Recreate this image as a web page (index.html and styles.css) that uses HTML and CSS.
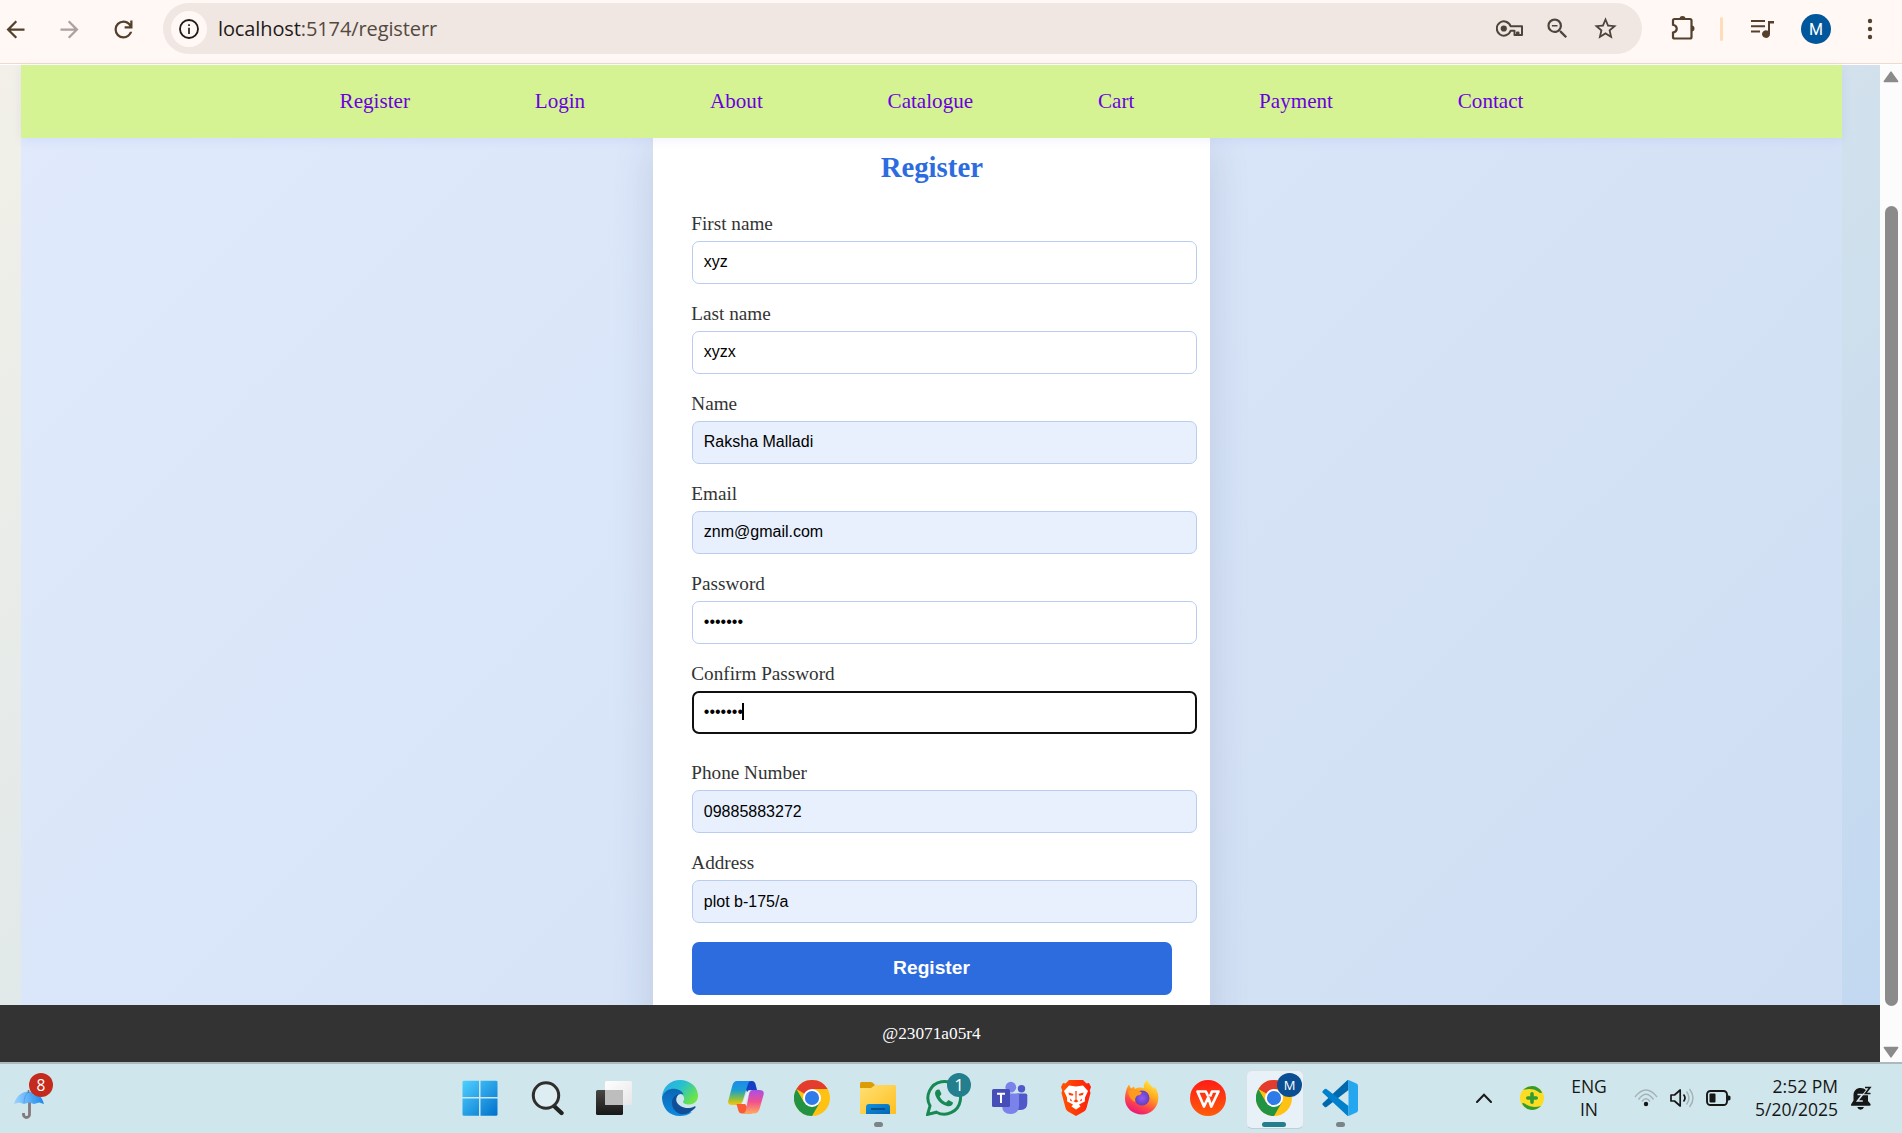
FILE: index.html
```html
<!DOCTYPE html>
<html lang="en">
<head>
<meta charset="utf-8">
<title>Register</title>
<link rel="stylesheet" href="styles.css">
</head>
<body>
<header class="toolbar">
  <svg class="ic" viewBox="0 0 24 24"><path d="M20 11H7.83l5.59-5.59L12 4l-8 8 8 8 1.41-1.41L7.83 13H20z"/></svg>
  <svg class="ic faded" viewBox="0 0 24 24"><path d="M4 11h12.17l-5.59-5.59L12 4l8 8-8 8-1.41-1.41L16.17 13H4z"/></svg>
  <svg class="ic" viewBox="0 0 24 24"><path d="M12 20q-3.35 0-5.675-2.325T4 12t2.325-5.675T12 4q1.725 0 3.3.712T18 6.75V4h2v7h-7V9h4.2q-.8-1.4-2.187-2.2T12 6Q9.500 6 7.750 7.750T6 12t1.750 4.250T12 18q1.925 0 3.475-1.100T17.650 14h2.100q-.700 2.650-2.850 4.325T12 20"/></svg>
  <div class="omnibox">
    <span class="info"><svg viewBox="0 0 24 24"><circle cx="12" cy="12" r="10.800" fill="none" stroke="#1f1a18" stroke-width="2.200"/><path d="M11 10.500h2V18h-2zM11 6.300h2v2.200h-2z" fill="#1f1a18"/></svg></span>
    <span class="url"><b>localhost</b>:5174/registerr</span>
    <span class="actions">
      <svg class="key" viewBox="0 0 27 17"><g fill="none" stroke="#4f443c" stroke-width="2"><path d="M14.600 6.200A7.100 7.100 0 1 0 14.600 10.800H18.500V15H21V12.500H22.500V15H26V6.200z" stroke-linejoin="round"/></g><circle cx="7.800" cy="8.500" r="3.100" fill="#4f443c"/></svg>
      <svg class="ic grey" viewBox="0 0 24 24"><path d="M15.500 14h-.790l-.280-.270A6.471 6.471 0 0 0 16 9.500 6.500 6.500 0 1 0 9.500 16c1.610 0 3.090-.590 4.230-1.570l.270.280v.790l5 4.990L20.490 19zm-6 0C7.010 14 5 11.990 5 9.500S7.010 5 9.500 5 14 7.010 14 9.500 11.990 14 9.500 14zM7 8.800h5v1.400H7z"/></svg>
      <svg class="ic grey" viewBox="0 0 24 24"><path d="M22 9.240l-7.190-.620L12 2 9.190 8.630 2 9.240l5.460 4.730L5.820 21 12 17.270 18.180 21l-1.630-7.030zM12 15.400l-3.760 2.270 1-4.280-3.320-2.880 4.380-.380L12 6.100l1.710 4.040 4.380.380-3.320 2.880 1 4.280z"/></svg>
    </span>
  </div>
  <svg class="ext" viewBox="0 0 26 26"><path d="M4.500 4H20Q21.500 4 21.500 5.500V22Q21.500 23.500 20 23.500H4.500Q3 23.500 3 22V17.600C8 16.500 8 11 3 9.800V5.500Q3 4 4.500 4z" fill="none" stroke="#54402c" stroke-width="2.200"/><path d="M9.500 4a3 3 0 0 1 6 0zM21.500 10.500a3 3 0 0 1 0 6z" fill="#54402c"/></svg>
  <i class="divider"></i>
  <svg class="media" viewBox="0 0 24 19"><path d="M0 1h14M0 6.200h14M0 11.400h9" stroke="#54402c" stroke-width="2" fill="none"/><path d="M17 1h6v2.400h-4V14a4 3.800 0 1 1-2-3.200z" fill="#54402c"/></svg>
  <span class="avatar">M</span>
  <svg class="menu" viewBox="0 0 6 22"><circle cx="3" cy="3" r="2.200"/><circle cx="3" cy="11" r="2.200"/><circle cx="3" cy="19" r="2.200"/></svg>
</header>

<div class="viewport">
  <div class="site">
    <div class="app">
      <nav class="nav"><a>Register</a><a>Login</a><a>About</a><a>Catalogue</a><a>Cart</a><a>Payment</a><a>Contact</a></nav>
      <main class="stage">
        <form class="card">
          <h2>Register</h2>
          <div class="field"><label>First name</label><div class="input">xyz</div></div>
          <div class="field"><label>Last name</label><div class="input">xyzx</div></div>
          <div class="field"><label>Name</label><div class="input filled">Raksha Malladi</div></div>
          <div class="field"><label>Email</label><div class="input filled">znm@gmail.com</div></div>
          <div class="field"><label>Password</label><div class="input">•••••••</div></div>
          <div class="field focus"><label>Confirm Password</label><div class="input">•••••••<i class="caret"></i></div></div>
          <div class="field"><label>Phone Number</label><div class="input filled low">09885883272</div></div>
          <div class="field"><label>Address</label><div class="input filled low">plot b-175/a</div></div>
          <button type="button">Register</button>
        </form>
      </main>
    </div>
    <footer class="footer">@23071a05r4</footer>
  </div>
  <div class="scroll">
    <svg viewBox="0 0 16 12"><path d="M8 1.200L14.600 10.500H1.400z" fill="#8b8b8b" stroke="#8b8b8b" stroke-width="1.600" stroke-linejoin="round"/></svg>
    <i class="thumb"></i>
    <svg viewBox="0 0 16 12"><path d="M8 10.800L14.600 1.500H1.400z" fill="#8b8b8b" stroke="#8b8b8b" stroke-width="1.600" stroke-linejoin="round"/></svg>
  </div>
</div>

<div class="taskbar">
  <svg width="0" height="0" class="defs"><defs>
    <linearGradient id="win" x1="0" y1="0" x2="1" y2="1"><stop offset="0" stop-color="#4fd0ff"/><stop offset="1" stop-color="#0070cc"/></linearGradient>
    <linearGradient id="tvd" x1="0" y1="0" x2="0" y2="1"><stop offset="0" stop-color="#484644"/><stop offset="1" stop-color="#181818"/></linearGradient>
    <linearGradient id="tvl" x1="0" y1="0" x2="1" y2="1"><stop offset="0" stop-color="#fff"/><stop offset="1" stop-color="#e6e6e8"/></linearGradient>
    <linearGradient id="e1" x1="0" y1="0" x2="1" y2=".6"><stop offset="0" stop-color="#2aa9ee"/><stop offset=".5" stop-color="#28c0cf"/><stop offset="1" stop-color="#6be547"/></linearGradient>
    <linearGradient id="e2" x1="0" y1="0" x2="0" y2="1"><stop offset="0" stop-color="#0c66b4"/><stop offset="1" stop-color="#0c8ae0"/></linearGradient>
    <linearGradient id="c1" x1="0" y1="0" x2="0" y2="1"><stop offset="0" stop-color="#1a8bf0"/><stop offset=".4" stop-color="#1d9fd0"/><stop offset=".7" stop-color="#7dbc50"/><stop offset="1" stop-color="#ffc400"/></linearGradient>
    <linearGradient id="c2" x1="0" y1="0" x2="0" y2="1"><stop offset="0" stop-color="#a84fe8"/><stop offset=".5" stop-color="#f2508f"/><stop offset="1" stop-color="#ffa95c"/></linearGradient>
    <linearGradient id="fo" x1="0" y1="0" x2="1" y2="1"><stop offset="0" stop-color="#ffdf75"/><stop offset="1" stop-color="#ffc01f"/></linearGradient>
    <linearGradient id="fb" x1="0" y1="0" x2="1" y2="1"><stop offset="0" stop-color="#1391dc"/><stop offset="1" stop-color="#0466b5"/></linearGradient>
    <linearGradient id="br" x1="0" y1="0" x2="1" y2="0"><stop offset="0" stop-color="#ff5500"/><stop offset="1" stop-color="#ff1e0a"/></linearGradient>
    <linearGradient id="ff" x1=".8" y1="0" x2=".3" y2="1"><stop offset="0" stop-color="#fff044"/><stop offset=".4" stop-color="#ffa51f"/><stop offset=".7" stop-color="#ff4a45"/><stop offset="1" stop-color="#e9127f"/></linearGradient>
    <radialGradient id="fp"><stop offset="0" stop-color="#9059ff"/><stop offset="1" stop-color="#6440b8"/></radialGradient>
    <linearGradient id="wp" x1="0" y1="0" x2="0" y2="1"><stop offset="0" stop-color="#ff1c16"/><stop offset="1" stop-color="#ff5b0a"/></linearGradient>
    <linearGradient id="um" x1="0" y1="0" x2="1" y2="0"><stop offset="0" stop-color="#9ed4ff"/><stop offset="1" stop-color="#188aef"/></linearGradient>
    <g id="chrome"><circle cx="18" cy="18" r="18" fill="#ffc112"/><path d="M18 18L2.410 9A18 18 0 0 1 33.590 9z" fill="#e33b2e"/><path d="M2.410 9A18 18 0 0 0 18 36L25.800 22.500 18 18 10.200 22.500z" fill="#229342"/><path d="M18 9H33.590L26 18z" fill="#ffc112"/><circle cx="18" cy="18" r="9" fill="#fff"/><circle cx="18" cy="18" r="7.100" fill="#2f7bea"/></g>
  </defs></svg>

  <div class="weather">
    <svg viewBox="0 0 34 30"><path d="M15.500 13V25.500a3 3 0 0 1-6 0V24" fill="none" stroke="#83787a" stroke-width="2.800"/><path d="M0 15C3 5 9 3 14.500 2.500 21 2.500 28 6 30 15L25 13.500 20 15 15 13.500 10 15 5 13.500z" fill="url(#um)"/><path d="M10 14Q10 7 14.500 3M20 14Q19.500 7 14.500 3" fill="none" stroke="#4f9fe8"/><path d="M14.500 1v3" stroke="#777" stroke-width="1.500"/></svg>
    <span class="badge red">8</span>
  </div>

  <div class="apps">
    <div class="app-icon start"><svg viewBox="0 0 36 36"><path d="M.500 2Q.500.800 2 .800H17V17H.500zM18.500.800H34Q35.500.800 35.500 2V17H18.500zM.500 18.500H17V35.700H2Q.500 35.700.500 34.500zM18.500 18.500H35.500V34.500Q35.500 35.700 34 35.700H18.500z" fill="url(#win)"/></svg></div>
    <div class="app-icon"><svg viewBox="0 0 36 36"><path d="M24 26l7.500 7" stroke="#222" stroke-width="4.400" stroke-linecap="round"/><circle cx="16" cy="15.500" r="12.700" fill="#e3eff5" fill-opacity=".7" stroke="#302e2d" stroke-width="3"/></svg></div>
    <div class="app-icon"><svg viewBox="0 0 36 36"><rect y="10" width="27" height="25" rx="1.500" fill="url(#tvd)"/><rect x="9" y="1" width="27" height="24" rx="1.500" fill="url(#tvl)"/><path d="M9 10H27V25H10.500Q9 25 9 23.500z" fill="#bdbdbd"/></svg></div>
    <div class="app-icon"><svg viewBox="0 0 36 36"><path d="M0 16C1.500 6 9 0 18 0 28 0 36 7 36 15.500 36 21 32 24.500 27.500 24.500 23 24.500 20.500 23 21 21.500 22.800 20 22.500 17.500 21 15.500 14 8 5 9 0 16z" fill="url(#e1)"/><path d="M0 17C2 11 7.500 8.500 12.500 8.800 17 9 21 12 21.500 14.500 16 12 13 18 14.500 23 16.500 30 24 33 30 32 26 35 22 36 18 36 7 36 0 28 0 17z" fill="url(#e2)"/><path d="M14 15C9 18 9 25 12 29.500 17 37 27 35 33.500 27.500 34 26.500 33 26 32.300 26.500 25 30 17 27 14.500 21.500 13.500 18.500 14.500 16 16.500 14z" fill="#104f98"/></svg></div>
    <div class="app-icon"><svg viewBox="0 0 36 36"><path d="M17 1H24Q26.500 1 27.500 4L29 10H23Q20.500 10 19.500 13L14 1z" fill="#153fc5"/><path d="M9 1H23Q20.800 1 20 4L15 20Q13.500 25 11 25H4Q-1 25 .500 20L4.500 5Q5.800 1 9 1z" fill="url(#c1)"/><path d="M8.500 24H17L24 33.500H14Q11 33.500 10.200 30z" fill="#fa5b34"/><path d="M24 10H31Q37 10 35.500 15L31.500 29Q30 33.500 26 33.500H14Q17 33.500 18 30L21 14Q22 10 24 10z" fill="url(#c2)"/><path d="M20 10.500H24Q21.500 10.500 20.500 14L17.500 24H13.500Q15 23 16 19z" fill="#e6f2f4"/></svg></div>
    <div class="app-icon"><svg viewBox="0 0 36 36"><use href="#chrome"/></svg></div>
    <div class="app-icon"><svg viewBox="0 0 36 36"><path d="M0 3.500Q0 2 1.500 2H11Q12.500 2 15 5V11H0z" fill="#dc9c05"/><path d="M0 8H11L15 5H34.500Q36 5 36 6.500V34H0z" fill="url(#fo)"/><path d="M6 34V27Q6 24 9 24H27Q30 24 30 27V34z" fill="url(#fb)"/><path d="M11 29H25" stroke="#045089" stroke-width="1.800"/></svg><i class="dot"></i></div>
    <div class="app-icon"><svg viewBox="0 0 36 36"><path d="M1.600 34.400L4 25.800A16.300 16.300 0 1 1 10.500 32.200z" fill="none" stroke="#178a53" stroke-width="3"/><path d="M12 9.500C9.500 10 8.500 12.500 9.500 15.500 11.500 21 16 25 21.500 26.200 24.500 26.800 27 25 27 22.500L22.500 20 20 22.500C17.500 21.500 15 19.500 13.700 16.500L15.500 14 13.700 10Q13.300 9.200 12 9.500z" fill="#178a53"/></svg><span class="badge teal">1</span></div>
    <div class="app-icon"><svg viewBox="0 0 36 36"><circle cx="18.800" cy="7.200" r="5.400" fill="#7b83eb"/><circle cx="29.500" cy="8.800" r="3.700" fill="#5059c9"/><path d="M25 13.500H33.500Q35.300 13.500 35.300 15.300V23Q35.300 30 28.500 30H25z" fill="#5059c9"/><path d="M11 13.500H27V25Q27 34 18.500 34 10.500 34 10 26z" fill="#7b83eb"/><rect y="9" width="18" height="18" rx="1.600" fill="#464eb8"/><path d="M5 13.800H13M9 13.800V23" stroke="#fff" stroke-width="2" fill="none"/></svg></div>
    <div class="app-icon"><svg viewBox="0 0 36 36"><path d="M11 0H25L28.500 3.500 31 3 33 7 31.800 10.500 32.500 13 28.500 28Q28 30 26 31.500L18 36 10 31.500Q8 30 7.500 28L3.500 13 4.200 10.500 3 7 5 3 7.500 3.500z" fill="url(#br)"/><path d="M11 5.500L18 6.500 25 5.500 30 11 27 17.500 26.800 21.500 21 24.500 22.500 26.500 18 29.500 13.500 26.500 15 24.500 9.200 21.500 9 17.500 6 11z" fill="#fff"/><path d="M10.500 12.500L15.500 14 14.500 15.800 11 15zM25.500 12.500L20.500 14 21.500 15.800 25 15zM17.300 11H18.700L18.500 19.500 20.500 21.200 18 22.500 15.500 21.200 17.500 19.500zM12.500 18.500l2 3-2.500-1zM23.500 18.500l-2 3 2.500-1z" fill="#ff3d08"/></svg></div>
    <div class="app-icon"><svg viewBox="0 0 36 36"><path d="M3 8L5 4.500 7 8.500 10 6.500 11 9C14 7 18 7.500 20 8 19 4 21.500 1.500 23.500 0 24 4 28 5.500 30 9 30.500 8 30.500 7.500 30.500 6.500 34 11 35 16 34 21 32.500 29 26 34.500 18 34.500 9 34.500 1 28 1 19 1 14 2 11 3 8z" fill="url(#ff)"/><circle cx="18" cy="18" r="7.500" fill="url(#fp)"/><path d="M4 11L11 9 18 12.500Q17 15 13.500 15.500 10 18 11.500 22 5 20 4 11z" fill="#ff9a20"/></svg></div>
    <div class="app-icon"><svg viewBox="0 0 36 36"><circle cx="18" cy="18" r="18" fill="url(#wp)"/><path d="M18 16L15.800 11.500H7.500L14 26.500 18.200 17.500 21.300 26.500 28.500 11.500H22L20 16.500" fill="none" stroke="#fff" stroke-width="2.700" stroke-linejoin="round"/></svg></div>
    <div class="app-icon active"><svg viewBox="0 0 36 36"><use href="#chrome"/></svg><span class="badge blue">M</span><i class="dot wide"></i></div>
    <div class="app-icon"><svg viewBox="0 0 36 36"><path d="M26.500 0V10L4.500 27Q3.500 27.500 2.800 27L.700 25Q0 24 .700 23.200L24.500 1Q25.300 0 26.500 0z" fill="#0069ae"/><path d="M26.500 36V26L4.500 9Q3.500 8.500 2.800 9L.700 11Q0 12 .700 12.800L24.500 35Q25.300 36 26.500 36z" fill="#0080cd"/><path d="M26.500 0L34.500 3.500Q36 4.200 36 5.800V30.200Q36 31.800 34.500 32.500L26.500 36z" fill="#25a6f0"/></svg><i class="dot"></i></div>
  </div>

  <div class="tray">
    <svg class="chev" viewBox="0 0 16 10"><path d="M1 9l7-7.300L15 9" fill="none" stroke="#1a1a1a" stroke-width="2" stroke-linecap="round"/></svg>
    <svg class="guard" viewBox="0 0 24 24"><circle cx="12" cy="12" r="12" fill="#fddd22"/><path d="M3 4Q7 0 12.500 0 19 .500 22 6.500 20.500 8 18 5.500 12 1.500 3 4zM21 20Q17 24 11.500 24 5 23.500 2 17.500 3.500 16 6 18.500 12 22.500 21 20z" fill="#2f9c35"/><path d="M12 7.800V16.200M7.800 12H16.200" stroke="#2f9c35" stroke-width="3.600" stroke-linecap="round"/></svg>
    <div class="lang">ENG<br>IN</div>
    <svg class="wifi" viewBox="0 0 24 20"><g fill="none" stroke="#a4b3b8" stroke-width="1.500"><path d="M1 9Q12-5 23 9M4.500 11.500Q12 1 19.500 11.500M8 13.500Q12 8 16 13.500"/></g><circle cx="12" cy="16" r="2.200" fill="#161616"/></svg>
    <svg class="vol" viewBox="0 0 24 20"><path d="M1 7H4.500L10.200 2V18L4.500 13H1z" fill="none" stroke="#161616" stroke-width="1.700" stroke-linejoin="round"/><path d="M13.500 6.500Q16.500 10 13.500 13.500" fill="none" stroke="#161616" stroke-width="1.700"/><path d="M16.500 3.500Q21.500 10 16.500 16.500M19.500 1Q26.500 10 19.500 19" fill="none" stroke="#a4b3b8" stroke-width="1.500"/></svg>
    <svg class="bat" viewBox="0 0 25 16"><rect x="1" y="1" width="20" height="14" rx="3.500" fill="none" stroke="#161616" stroke-width="1.900"/><rect x="3.500" y="3.500" width="6" height="9" rx="1" fill="#161616"/><path d="M21.500 5.500h1.500l1.500 1v3l-1.500 1h-1.500z" fill="#161616"/></svg>
    <div class="clock">2:52 PM<br>5/20/2025</div>
    <svg class="bell" viewBox="0 0 21 24"><path d="M2.500 9.500C2.500 4.500 5.500 2 9.500 2 14 2 17 5 17 9.500V15L19.500 18Q20 19.800 18.500 19.800H.800Q-.500 19.800.300 18L2.500 14.500zM6.200 21H13Q12 23.800 9.600 23.800 7.200 23.800 6.200 21z" fill="#161616"/><path d="M6.500 8.500H11.500L6.500 15H11.800" fill="none" stroke="#d0e6ec" stroke-width="1.600"/><path d="M14 1.500H19L14.500 7.500H19.500" fill="none" stroke="#d0e6ec" stroke-width="3.600"/><path d="M14 1.500H19L14.500 7.500H19.500" fill="none" stroke="#161616" stroke-width="1.600"/></svg>
  </div>
</div>
</body>
</html>
```
FILE: styles.css
```css
* { box-sizing: border-box; }
html, body { margin: 0; height: 1133px; overflow: hidden; }
body { display: flex; flex-direction: column; font-family: "Liberation Serif", serif; }
svg { display: block; flex: none; }

/* browser toolbar */
.toolbar {
  height: 65px; flex: none; display: flex; align-items: center;
  padding: 0 0 6px 2px; background: #fff8f5;
  border-bottom: 1px solid #fff; box-shadow: inset 0 -1px #eddccd;
  font-family: "Open Sans", sans-serif;
}
.ic { width: 27px; height: 27px; fill: #54402c; }
.toolbar > .ic + .ic { margin-left: 27px; }
.ic.faded { fill: #aca19d; }
.ic.grey { fill: #4f443c; }
.omnibox {
  margin-left: 26px; width: 1479px; height: 51px; border-radius: 26px; background: #f0e7e3;
  display: flex; align-items: center; padding: 0 23px 0 7.5px; margin-top: -1px;
}
.info { width: 36px; height: 36px; border-radius: 50%; background: #fff8f5; display: flex; align-items: center; justify-content: center; }
.info svg { width: 20px; height: 20px; overflow: visible; }
.url { margin-left: 11.5px; font-size: 20px; letter-spacing: -0.11px; color: #55493f; }
.url b { font-weight: 400; color: #1f1a18; }
.actions { margin-left: auto; display: flex; align-items: center; gap: 21px; }
.key { width: 27px; height: 17px; }
.ext { width: 26px; height: 26px; margin-left: 28px; margin-top: -2px; }
.divider { width: 3px; height: 24px; border-radius: 2px; background: #ffdcba; margin-left: 24px; }
.media { width: 24px; height: 19px; margin-left: 28px; }
.avatar { width: 30px; height: 30px; margin-left: 26px; border-radius: 50%; background: #01579b; color: #fff; font-size: 16px; display: flex; align-items: center; justify-content: center; font-family: Roboto, sans-serif; }
.menu { width: 6px; height: 22px; margin-left: 36px; fill: #54402c; }

/* page */
.viewport { height: 997px; flex: none; display: flex; }
.site { width: 1880px; display: flex; flex-direction: column; background: linear-gradient(135deg, #f2f0e8 0%, #d9e5ea 50%, #c1d8f1 100%); }
.app { width: 1821px; height: 940px; margin-left: 21px; display: flex; flex-direction: column; background: linear-gradient(135deg, #e0eafc 0%, #cfdef3 100%); }
.nav {
  height: 73px; flex: none; display: flex; align-items: center; justify-content: center; gap: 124.8px;
  background: #d5f392; color: #6a00e0; font-size: 21.12px; position: relative; z-index: 1;
  box-shadow: 0 2px 10px rgba(60, 60, 220, .08);
}
.stage { flex: 1; min-height: 0; overflow: hidden; display: flex; justify-content: center; }
.card { width: 557px; height: 960px; padding: 13px 38.400px 0 39px; background: #fff; box-shadow: 0 10px 38px rgba(40, 55, 100, .15); }
.card h2 { margin: 0 0 29px; line-height: 33px; font-size: 28.800px; text-align: center; color: #2d6cdf; }
.field { margin-bottom: 19px; }
.field label { display: block; height: 22px; line-height: 22px; font-size: 19.200px; color: #333; margin: 0 0 6px -0.7px; }
.input {
  width: 505px; height: 43px; padding: 0 10.800px 2px; border: 1px solid #b8cdf0; border-radius: 7px;
  font: 16px/40px "Liberation Sans", Arial, sans-serif; color: #000; background: #fff; display: flex; align-items: center;
}
.input.low { padding-bottom: 0; }
.filled { background: #e8f0fe; }
.focus { margin-bottom: 28px; }
.focus .input { border: 2px solid #101010; padding: 0 9.800px 2px; }
.caret { width: 2px; height: 17px; background: #000; margin-left: -1px; }
.card button { display: block; width: 480px; height: 53px; padding: 0 7px 1px 6px; border: 0; border-radius: 7px; background: #2d6cdf; color: #fff; font: bold 19.200px "Liberation Sans", Arial, sans-serif; }
.footer { height: 57px; background: #333; color: #fff; font-size: 17.280px; display: flex; align-items: center; justify-content: center; padding-right: 17px; }
.scroll { width: 22px; background: #fcfcfc; display: flex; flex-direction: column; align-items: center; padding: 6px 0 4px 0; }
.scroll svg { width: 16px; height: 12px; }
.thumb { width: 13px; height: 800px; margin: 123px 0 auto; border-radius: 7px; background: #8b8b8b; }

/* taskbar */
.taskbar { height: 71px; flex: none; display: flex; align-items: center; background: #cfe6ec; border-top: 2px solid #a9bbbf; font-family: "Open Sans", sans-serif; padding-bottom: 1px; }
.defs { position: absolute; }
.weather { position: relative; width: 40px; height: 50px; margin-left: 14px; padding-top: 16px; }
.weather svg { width: 34px; height: 30px; }
.badge { position: absolute; width: 24px; height: 24px; border-radius: 50%; color: #fff; font-size: 15.500px; line-height: 24px; text-align: center; }
.badge.red { background: #c42b1c; left: 15px; top: 0; }
.badge.teal { background: #237f8e; left: 36px; top: 5px; font-size: 17px; }
.badge.blue { background: #0a4f93; left: 36px; top: 5px; width: 25px; font-size: 13px; }
.apps { display: flex; margin-left: 393px; }
.app-icon { position: relative; width: 66px; height: 60px; display: flex; align-items: center; justify-content: center; }
.app-icon.start { margin-right: 2px; }
.app-icon svg { width: 36px; height: 36px; position: relative; }
.active::before { content: ""; position: absolute; left: 5px; top: 2px; width: 56px; height: 57px; border-radius: 6px; background: #e7f1f7; border: 1px solid #d5e2e8; border-bottom-color: #bfcfd5; }
.dot { position: absolute; left: 29px; bottom: 1px; width: 9px; height: 5px; border-radius: 3px; background: #7a8487; }
.dot.wide { left: 21px; width: 24px; background: #237f8e; }
.tray { display: flex; align-items: center; margin-left: 103px; color: #161616; font-size: 17.500px; line-height: 23.500px; }
.chev { width: 16px; height: 10px; }
.guard { width: 24px; height: 24px; margin-left: 28px; }
.lang { width: 50px; margin-left: 20px; text-align: center; }
.wifi { width: 24px; height: 20px; margin-left: 20px; }
.vol { width: 24px; height: 20px; margin-left: 12px; }
.bat { width: 25px; height: 16px; margin-left: 12px; }
.clock { width: 107px; text-align: right; }
.bell { width: 21px; height: 24px; margin-left: 13px; }
```
